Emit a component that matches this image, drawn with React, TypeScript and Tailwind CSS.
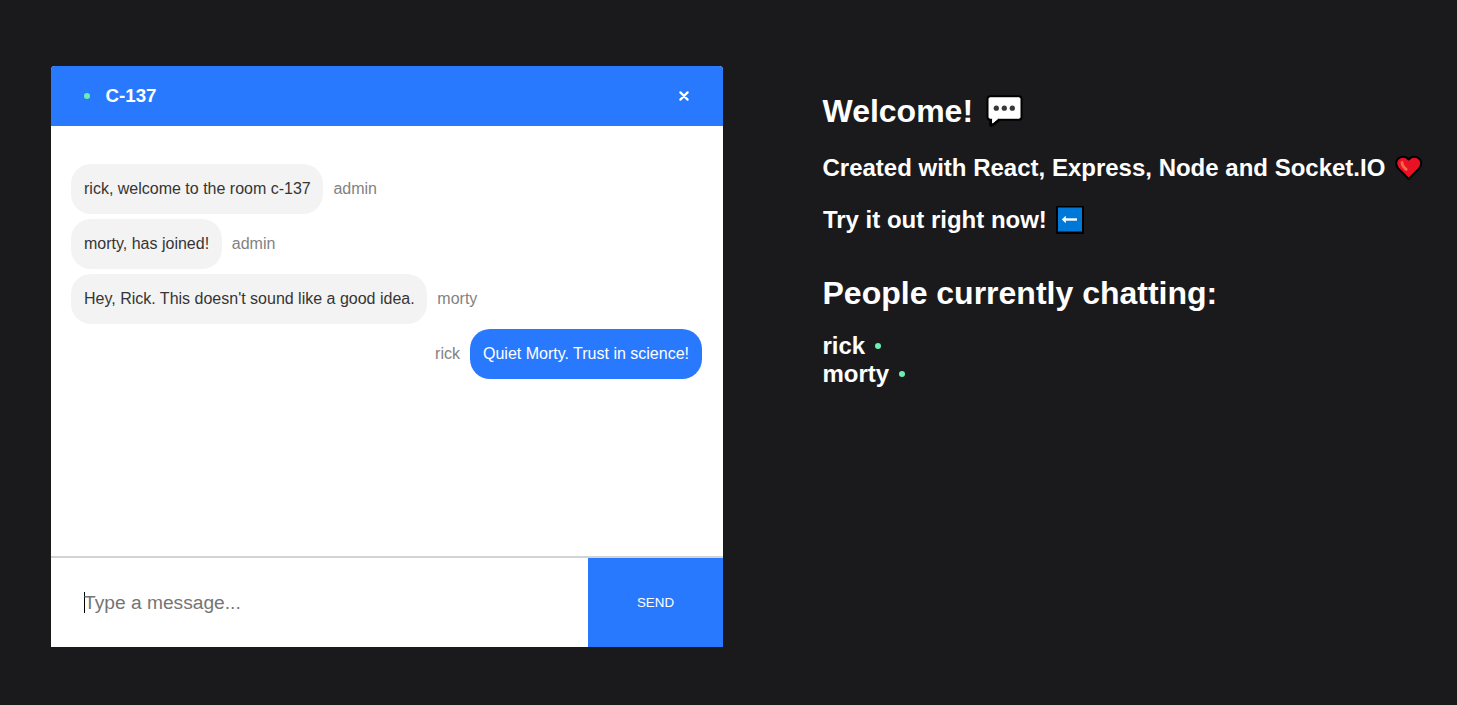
import React from 'react';

type Message = { user: string; text: string; own?: boolean };

const messages: Message[] = [
  { user: 'admin', text: 'rick, welcome to the room c-137' },
  { user: 'admin', text: 'morty, has joined!' },
  { user: 'morty', text: "Hey, Rick. This doesn't sound like a good idea." },
  { user: 'rick', text: 'Quiet Morty. Trust in science!', own: true },
];

const people = ['rick', 'morty'];

function OnlineDot() {
  return <span className="block h-1.5 w-1.5 shrink-0 rounded-full bg-[#69f0ae]" />;
}

function SpeechIcon() {
  return (
    <svg width="38" height="35" viewBox="0 0 38 35" aria-hidden="true">
      <path
        d="M5 3.8h29q1 0 1 1v18.4q0 1-1 1H14.2L6.6 30.4v-6.2H5q-1 0-1-1V4.8q0-1 1-1z"
        fill="#000"
        stroke="#000"
        strokeWidth="5"
        strokeLinejoin="round"
      />
      <path
        d="M5 3.8h29q1 0 1 1v18.4q0 1-1 1H13.4L7.6 29v-4.8H5q-1 0-1-1V4.8q0-1 1-1z"
        fill="#fff"
        stroke="#fff"
        strokeWidth="1"
        strokeLinejoin="round"
      />
      <circle cx="11.3" cy="14.2" r="2.6" fill="#383838" />
      <circle cx="19.3" cy="14.2" r="2.6" fill="#383838" />
      <circle cx="27.3" cy="14.2" r="2.6" fill="#383838" />
    </svg>
  );
}

function HeartIcon() {
  return (
    <svg width="28" height="26" viewBox="0 0 28 26" aria-hidden="true">
      <path
        d="M13.7 24 3.2 13.4C.3 10.2.6 5.5 3.8 3.1 7 .8 11.2 1.4 13.7 4.5c2.5-3.1 6.7-3.7 9.9-1.4 3.2 2.4 3.5 7.1.6 10.3z"
        fill="#e81224"
        stroke="#000"
        strokeWidth="2"
        strokeLinejoin="round"
      />
      <path d="M7 7.4c0 3.2 1.6 4.8 4.2 6.9" fill="none" stroke="#f4694c" strokeWidth="2.8" strokeLinecap="round" />
    </svg>
  );
}

function LeftArrowIcon() {
  return (
    <svg width="28" height="28" viewBox="0 0 28 28" aria-hidden="true">
      <rect width="28" height="28" rx="1" fill="#000" />
      <rect x="2" y="1.5" width="24" height="24" fill="#0078d7" />
      <path d="M8 13.5H21" fill="none" stroke="#fff" strokeWidth="2.4" />
      <path d="M5.8 13.5 9.8 9.8V17.2z" fill="#fff" />
    </svg>
  );
}

export default function App() {
  return (
    <div className="flex h-[705px] w-full items-start overflow-hidden bg-[#1a1a1d] pl-[51px] font-['Liberation_Sans',Arial,sans-serif]">
      <section className="mt-[66px] flex h-[581px] w-[672px] shrink-0 flex-col overflow-hidden rounded-t bg-white">
        <header className="flex h-[60px] shrink-0 items-center justify-between bg-[#2979ff] pr-[34px] pl-[33px] text-white">
          <div className="flex items-center gap-[15.5px]">
            <OnlineDot />
            <h3 className="text-[18.72px] leading-[22px] font-bold">C-137</h3>
          </div>
          <button aria-label="Close" className="block">
            <svg className="block" width="10" height="10" viewBox="0 0 10 10">
              <path d="M1.4 1.4l7.2 7.2M8.6 1.4 1.4 8.6" stroke="#fff" strokeWidth="2.2" strokeLinecap="round" />
            </svg>
          </button>
        </header>

        <div className="flex flex-1 flex-col gap-[5px] pt-[38px] pr-[21px] pl-5">
          {messages.map((message) => (
            <div
              key={message.text}
              className={
                message.own
                  ? 'flex flex-row-reverse items-center gap-2.5'
                  : 'flex items-center gap-2.5'
              }
            >
              <p
                className={
                  message.own
                    ? 'flex h-[50px] items-center rounded-[20px] bg-[#2979ff] px-[13px] text-base text-white'
                    : 'flex h-[50px] items-center rounded-[20px] bg-[#f3f3f3] pr-[12.7px] pl-[13px] text-base text-[#353535]'
                }
              >
                {message.text}
              </p>
              <span className="text-base text-[#828282]">{message.user}</span>
            </div>
          ))}
        </div>

        <form className="flex h-[91px] shrink-0 border-t-2 border-[#d3d3d3]">
          <div className="flex flex-1 items-center pl-[33px]">
            <span className="h-[21px] w-px bg-black" />
            <span className="-ml-px text-[19.2px] leading-[22px] text-[#757575]">Type a message...</span>
          </div>
          <button type="button" className="w-[135px] bg-[#2979ff] text-[13.333px] text-white">
            SEND
          </button>
        </form>
      </section>

      <section className="mt-[93px] ml-[99.5px] shrink-0 font-bold whitespace-nowrap text-white">
        <h1 className="flex h-[37px] items-center gap-[12px] text-[32px] leading-[37px]">
          Welcome! <SpeechIcon />
        </h1>
        <h2 className="mt-6 flex h-7 items-center gap-[9.5px] text-2xl leading-7">
          Created with React, Express, Node and Socket.IO <HeartIcon />
        </h2>
        <h2 className="mt-6 flex h-7 items-center gap-[9.3px] pl-[0.4px] text-2xl leading-7">
          Try it out right now! <LeftArrowIcon />
        </h2>
        <h1 className="mt-[41px] text-[32px] leading-[37px]">People currently chatting:</h1>
        <ul className="mt-5 text-2xl leading-7">
          {people.map((name) => (
            <li key={name} className="flex items-center gap-[9.5px]">
              {name}
              <OnlineDot />
            </li>
          ))}
        </ul>
      </section>
    </div>
  );
}
